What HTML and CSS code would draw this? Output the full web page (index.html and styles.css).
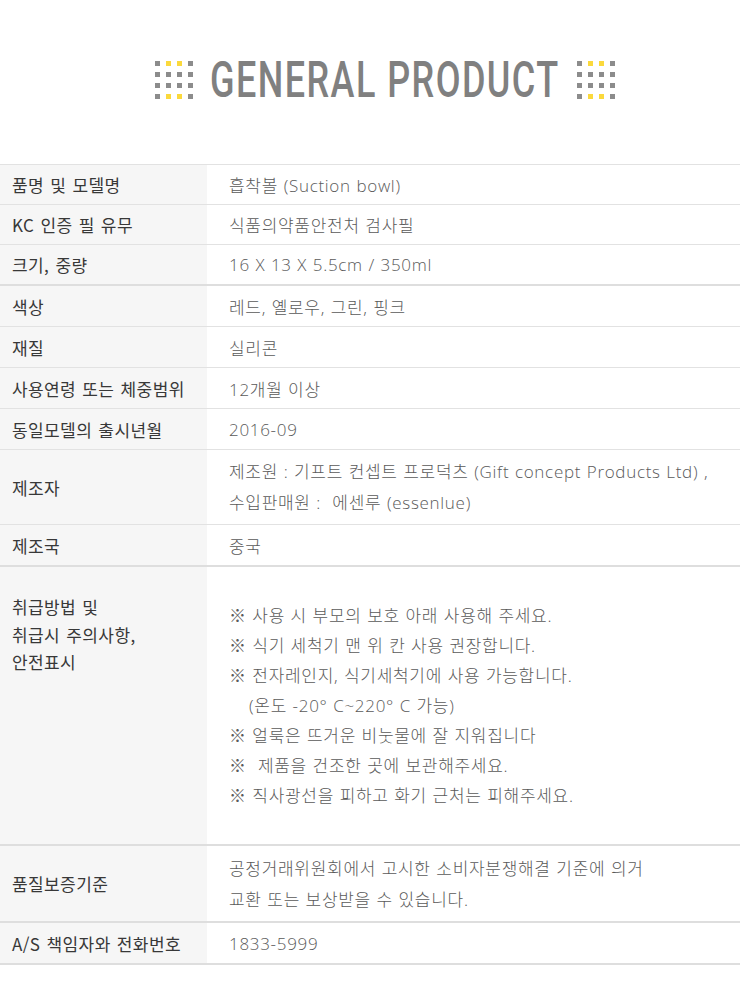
FILE: index.html
```html
<!DOCTYPE html>
<html lang="ko">
<head>
<meta charset="utf-8">
<link rel="stylesheet" href="styles.css">
</head>
<body>
<div class="page">
  <header class="title">
    <div class="dots">
      <i></i><i class="y"></i><i class="y"></i><i></i>
      <i></i><i></i><i></i><i></i>
      <i></i><i></i><i></i><i></i>
      <i></i><i class="y"></i><i class="y"></i><i></i>
    </div>
    <h1 class="heading"><span>GENERAL PRODUCT</span></h1>
    <div class="dots">
      <i></i><i class="y"></i><i class="y"></i><i></i>
      <i></i><i></i><i></i><i></i>
      <i></i><i></i><i></i><i></i>
      <i></i><i class="y"></i><i class="y"></i><i></i>
    </div>
  </header>

  <table class="spec">
    <tr class="r a"><th>품명 및 모델명</th><td>흡착볼 (Suction bowl)</td></tr>
    <tr class="r a"><th>KC 인증 필 유무</th><td>식품의약품안전처 검사필</td></tr>
    <tr class="r a thick"><th>크기, 중량</th><td>16 X 13 X 5.5cm / 350ml</td></tr>
    <tr class="r"><th>색상</th><td>레드, 옐로우, 그린, 핑크</td></tr>
    <tr class="r"><th>재질</th><td>실리콘</td></tr>
    <tr class="r"><th>사용연령 또는 체중범위</th><td>12개월 이상</td></tr>
    <tr class="r"><th>동일모델의 출시년월</th><td>2016-09</td></tr>
    <tr class="r2"><th>제조자</th><td>제조원 : 기프트 컨셉트 프로덕츠 (Gift concept Products Ltd) ,<br>수입판매원 :&nbsp; 에센루 (essenlue)</td></tr>
    <tr class="r thick"><th>제조국</th><td>중국</td></tr>
    <tr class="care thick"><th>취급방법 및<br>취급시 주의사항,<br>안전표시</th>
      <td>
        <p>※ 사용 시 부모의 보호 아래 사용해 주세요.</p>
        <p>※ 식기 세척기 맨 위 칸 사용 권장합니다.</p>
        <p>※ 전자레인지, 식기세척기에 사용 가능합니다.</p>
        <p class="indent">(온도 -20° C~220° C 가능)</p>
        <p>※ 얼룩은 뜨거운 비눗물에 잘 지워집니다</p>
        <p>※&nbsp; 제품을 건조한 곳에 보관해주세요.</p>
        <p>※ 직사광선을 피하고 화기 근처는 피해주세요.</p>
      </td></tr>
    <tr class="r2 q thick"><th>품질보증기준</th><td>공정거래위원회에서 고시한 소비자분쟁해결 기준에 의거<br>교환 또는 보상받을 수 있습니다.</td></tr>
    <tr class="r thick"><th>A/S 책임자와 전화번호</th><td>1833-5999</td></tr>
  </table>
</div>
</body>
</html>
```

FILE: styles.css
```css
html, body {
  margin: 0;
  padding: 0;
  background: #ffffff;
}

.page {
  width: 740px;
  font-family: "Noto Sans CJK KR", "Noto Sans", sans-serif;
}

.title {
  height: 164px;
  display: flex;
  align-items: center;
  justify-content: center;
  gap: 20px;
  padding-left: 30px;
  box-sizing: border-box;
  padding-bottom: 4px;
}

.dots {
  display: grid;
  grid-template-columns: repeat(4, 5px);
  grid-auto-rows: 5px;
  gap: 6px;
}

.dots i {
  display: block;
  background: #8c8c8c;
}

.dots i.y {
  background: #fbd93c;
}

.heading {
  margin: 0;
  width: 344px;
  height: 50px;
  display: flex;
  justify-content: center;
  align-items: center;
  overflow: visible;
}

.heading span {
  display: inline-block;
  font-family: "Roboto", "Liberation Sans", sans-serif;
  font-weight: 500;
  font-size: 50px;
  line-height: 50px;
  color: #808080;
  letter-spacing: 2px;
  white-space: nowrap;
  transform: scaleX(0.72);
}

.spec {
  width: 740px;
  border-collapse: collapse;
  border-top: 1px solid #e2e2e2;
}

.spec th,
.spec td {
  padding: 0;
  border-bottom: 1px solid #e2e2e2;
  vertical-align: middle;
  text-align: left;
}

.spec tr.thick th,
.spec tr.thick td {
  border-bottom: 2px solid #dedede;
}

.spec th {
  width: 207px;
  background: #f6f6f6;
  padding-left: 12px;
  box-sizing: border-box;
  font-weight: 400;
  font-size: 17px;
  color: #383838;
  letter-spacing: 0.4px;
  word-spacing: 1px;
  white-space: nowrap;
}

.spec td {
  padding-left: 22px;
  font-family: "Open Sans", "Noto Sans CJK KR", sans-serif;
  font-weight: 300;
  font-size: 17px;
  color: #5a5a5a;
  letter-spacing: 0.7px;
  word-spacing: 0.5px;
  white-space: nowrap;
}

.spec tr.r th,
.spec tr.r td {
  height: 40px;
}

.spec tr.r.a th,
.spec tr.r.a td {
  height: 39px;
}

.spec tr.r2 th,
.spec tr.r2 td {
  height: 74px;
  line-height: 31px;
}

.spec tr.r2.q th,
.spec tr.r2.q td {
  height: 75px;
}

.spec tr.care th {
  height: 279px;
  vertical-align: top;
  padding-top: 26px;
  line-height: 27.5px;
}

.spec tr.care td p {
  margin: 0;
  line-height: 30px;
}

.spec tr.care td p.indent {
  padding-left: 20px;
}
```
